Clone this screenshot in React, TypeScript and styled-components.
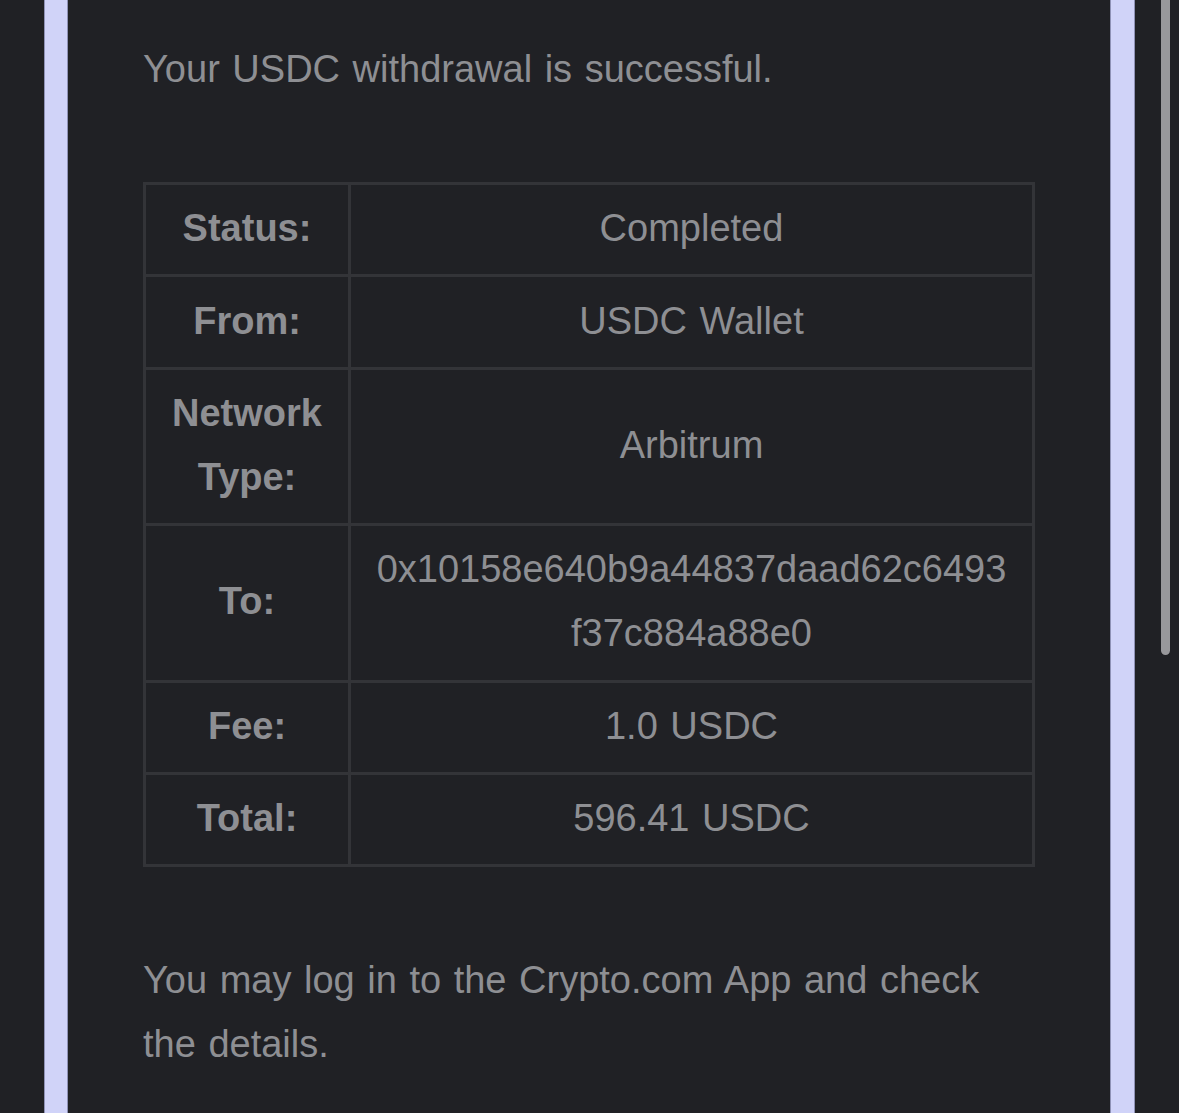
import styled, { createGlobalStyle } from "styled-components";

const color = {
  page: "#202125",
  lavender: "#d0d3f8",
  lavenderEdge: "#8f92b6",
  text: "#8e8f93",
  rule: "#333438",
  scroll: "#98989b",
};

const GlobalStyle = createGlobalStyle`
  html, body {
    margin: 0;
    padding: 0;
    background: ${color.page};
  }
  body {
    font-family: "Liberation Sans", Arial, Helvetica, sans-serif;
  }
`;

const Page = styled.div`
  position: relative;
  height: 1113px;
  overflow: hidden;
  padding: 0 44px;
  display: flex;
  background: ${color.page};
`;

const Frame = styled.div`
  flex: 1;
  display: flex;
  background: ${color.lavender};
  border-left: 1px solid ${color.lavenderEdge};
  border-right: 1px solid ${color.lavenderEdge};
  padding: 0 23px 0 22px;
`;

const Panel = styled.main`
  flex: 1;
  background: ${color.page};
  border-left: 1px solid ${color.lavenderEdge};
  border-right: 1px solid ${color.lavenderEdge};
  padding: 37px 75px 0 75px;
`;

const Text = styled.p`
  margin: 0;
  font-size: 38px;
  line-height: 64px;
  word-spacing: 2px;
  color: ${color.text};
`;

const Table = styled.table`
  width: 100%;
  margin: 81px 0 81px;
  border-collapse: collapse;
  border: 3px solid ${color.rule};
  color: ${color.text};
  font-size: 38px;
  line-height: 64px;
`;

const Label = styled.th`
  width: 150px;
  padding: 11.2px 26px 14.2px;
  border: 3px solid ${color.rule};
  font-weight: 700;
  text-align: center;
`;

const Value = styled.td<{ $mono?: boolean }>`
  padding: 11.2px 24px 14.2px;
  border: 3px solid ${color.rule};
  text-align: center;
  word-spacing: 2px;
  word-break: ${(p) => (p.$mono ? "break-all" : "normal")};
`;

const ScrollThumb = styled.div`
  position: absolute;
  top: -10px;
  right: 9px;
  width: 9px;
  height: 665px;
  border-radius: 5px;
  background: ${color.scroll};
`;

const rows: { label: string; value: string; wrap?: boolean }[] = [
  { label: "Status:", value: "Completed" },
  { label: "From:", value: "USDC Wallet" },
  { label: "Network Type:", value: "Arbitrum" },
  { label: "To:", value: "0x10158e640b9a44837daad62c6493f37c884a88e0", wrap: true },
  { label: "Fee:", value: "1.0 USDC" },
  { label: "Total:", value: "596.41 USDC" },
];

function App() {
  return (
    <>
      <GlobalStyle />
      <Page>
        <Frame>
          <Panel>
            <Text>Your USDC withdrawal is successful.</Text>
            <Table>
              <tbody>
                {rows.map((r) => (
                  <tr key={r.label}>
                    <Label>{r.label}</Label>
                    <Value $mono={r.wrap}>{r.value}</Value>
                  </tr>
                ))}
              </tbody>
            </Table>
            <Text>You may log in to the Crypto.com App and check the details.</Text>
          </Panel>
        </Frame>
        <ScrollThumb />
      </Page>
    </>
  );
}

export default App;
